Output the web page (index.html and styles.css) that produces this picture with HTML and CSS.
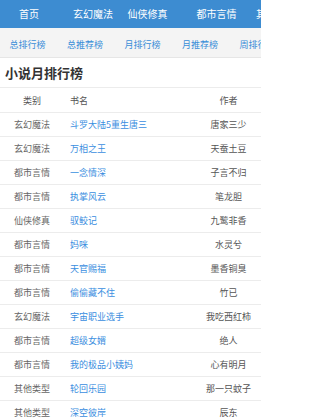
FILE: index.html
```html
<!DOCTYPE html>
<html lang="zh-CN">
<head>
<meta charset="utf-8">
<title>小说月排行榜</title>
<link rel="stylesheet" href="styles.css">
</head>
<body>
<div class="page">
  <nav class="topnav">
    <a class="tn tn1" href="#">首页</a>
    <a class="tn tn2" href="#">玄幻魔法</a>
    <a class="tn tn3" href="#">仙侠修真</a>
    <a class="tn tn4" href="#">都市言情</a>
    <a class="tn tn5" href="#">其他类型</a>
  </nav>
  <nav class="subnav">
    <a href="#">总排行榜</a>
    <a href="#">总推荐榜</a>
    <a href="#">月排行榜</a>
    <a href="#">月推荐榜</a>
    <a href="#">周排行榜</a>
  </nav>
  <h1 class="title">小说月排行榜</h1>
  <table class="rank">
    <thead>
      <tr><th class="c1">类别</th><th class="c2">书名</th><th class="c3">作者</th></tr>
    </thead>
    <tbody>
      <tr><td class="c1">玄幻魔法</td><td class="c2"><a href="#">斗罗大陆5重生唐三</a></td><td class="c3">唐家三少</td></tr>
      <tr><td class="c1">玄幻魔法</td><td class="c2"><a href="#">万相之王</a></td><td class="c3">天蚕土豆</td></tr>
      <tr><td class="c1">都市言情</td><td class="c2"><a href="#">一念情深</a></td><td class="c3">子言不归</td></tr>
      <tr><td class="c1">都市言情</td><td class="c2"><a href="#">执掌风云</a></td><td class="c3">笔龙胆</td></tr>
      <tr><td class="c1">仙侠修真</td><td class="c2"><a href="#">驭鲛记</a></td><td class="c3">九鹭非香</td></tr>
      <tr><td class="c1">都市言情</td><td class="c2"><a href="#">妈咪</a></td><td class="c3">水灵兮</td></tr>
      <tr><td class="c1">都市言情</td><td class="c2"><a href="#">天官赐福</a></td><td class="c3">墨香铜臭</td></tr>
      <tr><td class="c1">都市言情</td><td class="c2"><a href="#">偷偷藏不住</a></td><td class="c3">竹已</td></tr>
      <tr><td class="c1">玄幻魔法</td><td class="c2"><a href="#">宇宙职业选手</a></td><td class="c3">我吃西红柿</td></tr>
      <tr><td class="c1">都市言情</td><td class="c2"><a href="#">超级女婿</a></td><td class="c3">绝人</td></tr>
      <tr><td class="c1">都市言情</td><td class="c2"><a href="#">我的极品小姨妈</a></td><td class="c3">心有明月</td></tr>
      <tr><td class="c1">其他类型</td><td class="c2"><a href="#">轮回乐园</a></td><td class="c3">那一只蚊子</td></tr>
      <tr><td class="c1">其他类型</td><td class="c2"><a href="#">深空彼岸</a></td><td class="c3">辰东</td></tr>
    </tbody>
  </table>
</div>
</body>
</html>
```

FILE: styles.css
```css
html, body {
  margin: 0;
  padding: 0;
  background: #ffffff;
}
body {
  font-family: "Noto Sans CJK SC", "Noto Sans", sans-serif;
  overflow: hidden;
}
a {
  text-decoration: none;
}
.page {
  width: 261px;
  overflow: hidden;
}
.topnav {
  display: flex;
  align-items: center;
  height: 28px;
  background: #3d8cd1;
  padding-left: 19px;
  white-space: nowrap;
  overflow: hidden;
}
.tn {
  color: #ffffff;
  font-size: 10px;
  line-height: 28px;
  flex: none;
}
.tn2 { margin-left: 34px; }
.tn3 { margin-left: 14.5px; }
.tn4 { margin-left: 29px; }
.tn5 { margin-left: 19.5px; }

.subnav {
  display: flex;
  align-items: center;
  height: 28px;
  background: #f4f4f4;
  border-bottom: 1px solid #e6e6e6;
  padding-left: 9.5px;
  padding-top: 1px;
  gap: 21.5px;
  white-space: nowrap;
  overflow: hidden;
}
.subnav a {
  flex: none;
  font-size: 9px;
  color: #3a8ed8;
  line-height: 28px;
  padding-top: 3px;
}
.title {
  margin: 0;
  height: 28px;
  line-height: 28px;
  padding: 1px 0 0 5px;
  font-size: 13px;
  font-weight: bold;
  color: #333333;
  letter-spacing: 0;
}
.rank {
  width: 261px;
  border-collapse: collapse;
  table-layout: fixed;
  border-top: 1px solid #ececec;
}
.rank th, .rank td {
  font-size: 9px;
  font-weight: normal;
  height: 23px;
  padding: 0;
  border-bottom: 1px solid #ececec;
  white-space: nowrap;
  overflow: hidden;
}
.rank thead th {
  height: 24px;
  color: #555555;
}
.rank .c1 {
  width: 64px;
  text-align: center;
}
.rank td.c1 {
  color: #666666;
}
.rank .c2 {
  width: 126px;
  text-align: left;
  padding-left: 6px;
}
.rank .c2 a {
  color: #3a8ee0;
}
.rank .c3 {
  text-align: center;
  color: #555555;
}
```
